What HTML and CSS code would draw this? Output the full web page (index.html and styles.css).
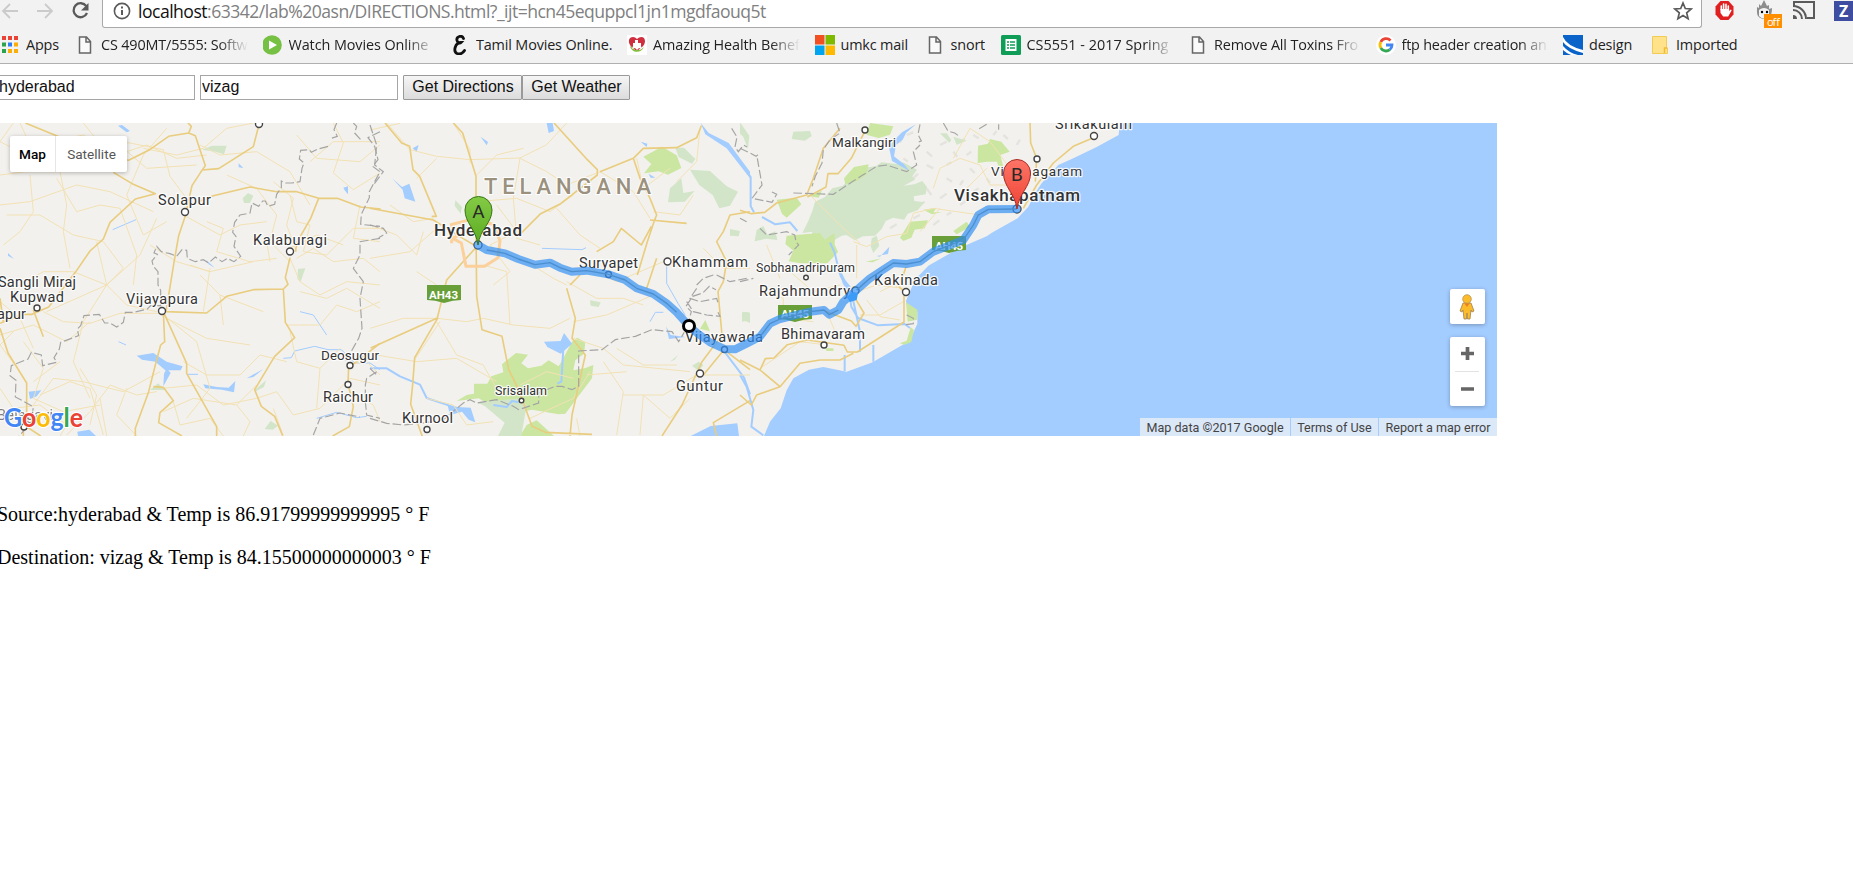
FILE: index.html
```html
<!DOCTYPE html>
<html lang="en">
<head>
<meta charset="utf-8">
<title>Directions</title>
<link rel="stylesheet" href="styles.css">
</head>
<body>
<header class="chrome">
  <div class="toolbar">
    <svg class="nav" width="102" height="27" viewBox="0 0 102 27" fill="none">
      <g stroke="#cbcbcb" stroke-width="1.8"><path d="M18 11H3M10 4L3 11l7 7M37 11h15M45 4l7 7-7 7"/></g>
      <path d="M86.3 6.2A7 7 0 1 0 87 13" stroke="#5a5a5a" stroke-width="2.3"/><path d="M88.500 3v7.500h-7.500z" fill="#5a5a5a"/>
    </svg>
    <div class="address">
      <svg width="18" height="20" viewBox="0 0 18 20" fill="none" stroke="#5a5a5a"><circle cx="9" cy="10" r="7.600" stroke-width="1.600"/><path d="M9 9v5M9 5.500v2" stroke-width="2"/></svg>
      <div class="url"><span class="host">localhost</span>:63342/lab%20asn/DIRECTIONS.html?_ijt=hcn45equppcl1jn1mgdfaouq5t</div>
      <svg class="star" width="20" height="20" viewBox="0 0 20 20" fill="none" stroke="#5a5a5a" stroke-width="1.700"><path d="M10 2l2.300 5.500 5.900.5-4.500 3.900 1.400 5.800-5.100-3.100-5.100 3.100 1.400-5.800L1.800 8l5.900-.5z"/></svg>
    </div>
    <svg class="extensions" width="151" height="29" viewBox="0 0 151 29">
      <path d="M18.500 1h8l5 5.500v8l-5 5.500h-8l-5-5.500v-8z" fill="#e02020"/>
      <path d="M19.300 10V6M21.600 9V4M24 9V4.300M26.300 10V6" fill="none" stroke="#fff" stroke-width="1.600" stroke-linecap="round"/><path d="M18.500 9h8.600v2l1.600-1.500 1 .8-3.500 6.200h-5l-2.700-3.500z" fill="#fff"/>
      <path d="M62 0l-3 6-2-2v4l-2-1c0 6-1 11 7 12 7 0 8-6 8-11l-3 1V5l-2 1z" fill="#8d8d8d"/><path d="M57 10q5-4 10 0v6q-5 5-10 0z" fill="#f4f4f4"/><circle cx="60" cy="12" r="1.200"/><circle cx="65" cy="12" r="1.200"/>
      <rect x="62" y="14" width="18" height="14" fill="#ff8f00"/><text x="65" y="25.500" class="badge" textLength="13">off</text>
      <g fill="none" stroke="#5a5a5a" stroke-width="2"><path d="M92 6V2h20v16h-7M91 10a9 9 0 0 1 9 9M91 6a13 13 0 0 1 13 13"/></g><path d="M91 15a4 4 0 0 1 4 4h-4z" fill="#5a5a5a"/>
      <rect x="132" y="1" width="19" height="20" fill="#3e4da0"/><text x="137" y="17" class="zed">Z</text>
    </svg>
  </div>
  <nav class="bookmarks">
    <a class="bm apps"><svg viewBox="0 0 20 20"><path d="M2 1h4v4H2zM8 1h4v4H8zM14 1h4v4h-4z" fill="#ea4335"/><path d="M2 7.500h4v4H2zM2 14h4v4H2z" fill="#2ba24c"/><path d="M8 7.500h4v4H8z" fill="#2f7df6"/><path d="M14 7.500h4v4h-4zM8 14h4v4H8zM14 14h4v4h-4z" fill="#fbae08"/></svg><span>Apps</span></a>
    <a class="bm wide fade a"><svg viewBox="0 0 20 20"><path d="M4.500 2h7l4 4.500V18h-11zM11 2v5h4.500" fill="#fafafa" stroke="#666" stroke-width="1.500"/></svg><span>CS 490MT/5555: Softw</span></a>
    <a class="bm wide fade b"><svg viewBox="0 0 20 20"><circle cx="9" cy="10" r="9.800" fill="#76c043"/><path d="M6 5.500l8 4.500-8 4.500z" fill="#fff"/></svg><span>Watch Movies Online</span></a>
    <a class="bm tamil"><svg viewBox="0 0 20 20"><path d="M13.500 3.500C12-.5 6 1.500 7 5.500c.5 2.500 3 3 4 2-6 0-8 9-4 11 3 1.200 6-.5 7.500-3" fill="none" stroke="#111" stroke-width="2.800" stroke-linecap="round"/></svg><span>Tamil Movies Online.</span></a>
    <a class="bm wide fade c"><svg viewBox="0 0 20 20"><rect width="20" height="20" fill="#fff"/><path d="M10 16C3 12 0 7 3 3c3-2 5-1 7 1 2-2 5-3 7-1 3 5-1 9-7 13z" fill="#cf3040"/><path d="M3 11c1 6 10 9 14 1l-4 3H8z" fill="#82bd3c"/><path d="M8 5h3v3h3v3l1 3-3-1-2 2-2-2-3 1 1-3V8h2z" fill="#fff"/></svg><span>Amazing Health Benef</span></a>
    <a class="bm umkc"><svg viewBox="0 0 20 20"><path d="M0 0h9.500v9.500H0z" fill="#f25022"/><path d="M10.500 0H20v9.500h-9.500z" fill="#7fba00"/><path d="M0 10.500h9.500V20H0z" fill="#00a4ef"/><path d="M10.500 10.500H20V20h-9.500z" fill="#ffb900"/></svg><span>umkc mail</span></a>
    <a class="bm snort"><svg viewBox="0 0 20 20"><path d="M4.500 2h7l4 4.500V18h-11zM11 2v5h4.500" fill="#fafafa" stroke="#666" stroke-width="1.500"/></svg><span>snort</span></a>
    <a class="bm wide fade d"><svg viewBox="0 0 20 20"><rect width="20" height="20" rx="1.500" fill="#0f9d58"/><path d="M4.500 4h11v12h-11z" fill="#fff"/><path d="M6 7h2m1 0h5M6 10h2m1 0h5M6 13h2m1 0h5" stroke="#0f9d58" stroke-width="1.600"/></svg><span>CS5551 - 2017 Spring</span></a>
    <a class="bm wide fade e"><svg viewBox="0 0 20 20"><path d="M4.500 2h7l4 4.500V18h-11zM11 2v5h4.500" fill="#fafafa" stroke="#666" stroke-width="1.500"/></svg><span>Remove All Toxins Fro</span></a>
    <a class="bm wide fade f"><svg viewBox="0 0 20 20"><circle cx="10" cy="10" r="10" fill="#fff"/><g fill="none" stroke-width="2.800"><path d="M14.500 5.500A6 6 0 0 0 4.800 7" stroke="#ea4335"/><path d="M4.800 7a6 6 0 0 0 0 6" stroke="#fbbc05"/><path d="M4.800 13a6 6 0 0 0 9 1.600" stroke="#34a853"/><path d="M10 10h6q0 3-2.200 4.600" stroke="#4285f4"/></g></svg><span>ftp header creation an</span></a>
    <a class="bm design"><svg viewBox="0 0 20 20"><path d="M0 0h20v20H0z" fill="#0a63c9"/><path d="M0 2q4 9 20 13v3Q5 14 0 7zM0 11q6 7 15 9H8Q3 18 0 15z" fill="#fff"/></svg><span>design</span></a>
    <a class="bm imported"><svg viewBox="0 0 20 20"><path d="M2.500 1.500h14v12h1v5h-15z" fill="#ffe28a" stroke="#f2cb55"/><path d="M14.500 18v-5h3" fill="none" stroke="#efbd35" stroke-width="1.500"/></svg><span>Imported</span></a>
  </nav>
</header>
<main>
  <form class="controls">
    <input class="from" type="text" value="hyderabad"><input class="to" type="text" value="vizag"><button class="dir" type="button">Get Directions</button><button class="wea" type="button">Get Weather</button>
  </form>
  <section class="map">
    <svg class="canvas" width="1497" height="313" viewBox="0 0 1497 313">
      <rect width="1497" height="313" fill="#f2f1ed"/>
      <!-- eastern terrain, parks and sea -->
      <g transform="translate(740 -8) scale(.33333)">
        <path class="hills" d="M470 70l14 12M500 60l20-8M560 110l16 14M600 90l20-10M640 110l12 16M560 150l20 10M520 190l14-14M620 190l16 10M660 210l10-14M690 160l14 14M600 250l20-14M560 220l14 20M660 270l20-14M700 230l16-10M740 190l10 14M520 310l20-10M580 330l18-14M450 340l20-12M420 320l16-16M390 350l20-14M790 60l14 12M830 90l10-16M760 60l10-12M660 80l14-8M700 60l16 10M490 130l14 10M780 100l14 10M840 140l-10 16M620 150l14-8M680 120l14-10M540 270l14-10M620 300l14-8"/>
        <g class="forest"><path d="M205 318l12-30 8-28 30-14 22-26 32-8 18-22 26-10 20-22 34-4 18-12 50 6 14-6 42 22-14 20 8 10-34 18 32-4 24-10 14 18-4 22-36 6 2 14 30 4-20 24-30 10-10 18-34-6-22 10-12 24-20 20-36 2-24 12-26-16-14 2-20 12-6 20-12 14-18-22-20 2-20-8 8-30-30 4zM160 50l50-2 5 15-20 14-40-5zM0 22l28 40-4 40-14-36-10-10zM50 345l20-12 12 26 24-10 6 26-34-4-34 8zM395 370l15-8 8 30-18 22-8-20zM6 592l22 0-2 24-20 4zM600 55l20 0 14 20-6 8zM640 65l40 12-30 12z"/></g>
        <g class="park"><path d="M140 362l100-8 14 20 30-20 0 35 10 22-32 34-80 0-36-6 14-32-24-20zM714 92l30-6 6-14 34 8 25 30-28 10 10 40-16-6-4-14-30 0-28 4zM312 190l30-34 44-8-6 30-30 20-34 10zM390 24l70 10-10 25-34 10-36-10zM110 254l60-6 14 20-44 40-14-12zM480 368l30-48 54-4-10 24-30 4-10 24-24 10zM640 348l40-28 10 16-40 22zM378 440l46-10-26 12zM256 700h24v8h-20zM550 284l40-6-10 14 26 0-30 6zM200 242l46-14-10 20z"/></g>
        <g class="water-line"><path d="M0 140l32 46v88l10 18M66 306l40 22 44-6 22 26M270 383l14 30 10 42 8 28 24 42 8 50 20 34 60 22 80-4 16 12M336 540l24 110 0 60M400 690v50M314 720v48M0 780l20 35 20 70-6 50 36 26"/></g>
        <path d="M528 28l-30 26-10 20-20 16-6 34 30 24 16 20-52-30-10-46 40-40zM420 425l28-30-4 22-34 6zM296 455l20 40 24 30-8 20-24-40z" fill="#a3ccff"/>
        <path class="sea" d="M1140 24L1136 60L1070 96L1000 130L955 150L905 205L888 230L865 275L833 310L758 352L740 364L660 398L565 452L527 492L514 520L498 558L503 582L532 590V627L508 678L465 703L398 742L320 770L250 756L207 764L160 790L140 826L122 880L90 920L72 963H2272V24z"/>
        <path class="parkedge" d="M498 562l34 22-1 30-28 6zM480 685l20-8 12-40 10 8-8 36-20 8z"/>
      </g>
      <!-- central parks and rivers -->
      <g transform="translate(370 -8) scale(.33333)">
        <g class="park"><path d="M260 858l30-18 22-4 0-30 40 0 12-22 36-12-4-24 42-34 36 5-20 26 20 15 40-8 22-16 30 18 14-24 26-50 16-12 24 14-4 34-26 20-6 30 34-6 26-10-4 40-50 66-30 40-20 2-80-14-80 16-80-50zM470 930l30-14 52 47H450zM820 125l56-30 44 26 14 38-40 20-28-10-44 6 22-28zM1006 615l14 34-30-8z"/></g>
        <g class="forest"><path d="M320 862l130-12 20 20-16 93h-70l20-40-60-50zM916 98l26 0 34 34-10 14-40-20zM960 164l60 4 50 46 34 16-24 42-32 8-20-40-40-30zM900 220l34-30 6 44 34-6-30 32-50 2zM660 556l32 6-6 14-24-4zM966 752l20-12 14 10-14 18zM256 256l20 20-4 20-18-24zM900 740l24-20-10 14zM1080 342l30 6-4 16-26-2zM1120 590l20 4v30l-24-10z"/></g>
        <g class="water"><path d="M66 190l30 26 22-10 18 54-32-10-6-26zM530 24h18l4 24-16 6zM332 65l22 16-4 10zM128 100l18-10-6 20zM522 680l50-2 10-24 24 32-34 30-40-20zM232 868l30 8 40 2 14 44-20-8-20-24-36 10zM992 24l24 30 60 30 64 86v20L1070 100l-64-42zM888 634l14 26 45 6-50 6zM812 80l20 6-2 10zM836 176l20 12-14 0z"/><path d="M962 963l60-30 80-8 5 38z"/></g>
        <g class="water-line"><path d="M0 760l50 0 40 24 60 25 20 40 66 22M580 700l-6 100-12 6M1062 708l60 80 18 50M370 870l40 6 16-18 20 4"/></g>
        <g class="water-line thin"><path d="M516 400l120 4 12-6M890 455v50l34 60 22 36M840 620l16-28 24 0"/></g>
      </g>
      <!-- western lakes -->
      <g transform="translate(0 -8) scale(.33333)">
        <g class="water"><path d="M410 722l50-8 40 26 48 14-6 12-46 0-30-26-40-6zM500 760l12 14-22 40 2-38zM610 808l40 8 36 2 20-20-4 34-36-8-50-4zM86 830l38-4-14 18-20 8zM354 32l26 20 10-4-24-18zM1030 218l14-4v24l-10-12zM716 145l14 14-14-2zM232 950l36-6 20 19h-54zM740 790l50-28-30 24zM618 434l26 24-18-10zM24 414l18 18-18-10z"/></g>
        <g class="forest"><path d="M606 104l30-12h44l-8 26-26-8zM728 250l16-16 16 8-10 22-18 0zM894 462l22-2-14 40-10-8zM764 826l34-30-6 20-28 14zM450 825l24-20 22 20-32 0zM794 942l18-24 22 14-16 12z"/></g>
        <g class="water-line thin"><path d="M850 730l24-2 10-20 60-14 40 10 40 0 40 40 46 0 30 20M900 590l40 10 40 60M950 910l60-18 60 16 30-4M338 344l70-30M356 680l22 10M564 778h30"/></g>
      </g>
      <!-- minor roads -->
      <g class="minor" transform="translate(0 -8) scale(.33333)">
        <path d="M0 80l40 20 60 10 50-30 100-20 100 60 90-30 90 40 90-10M60 24l40 86 80 60 20 100-10 80 20 110M0 180l80-10 90 0 140-10 60-60 70 60 150-10M0 270l90-10 140-50 100 20 130 60M40 24L0 80M20 300l100 0 100 60 90 20 60 80-50 50-100-40-90 0-90 50M90 180l10 110-40 60-50 40M170 190l60 100 70-20 60 10 50 140-10 90M250 24l40 50 100 10 100 20 20 80 60 80M500 40l-70 80-50 120 50 120 70-40M430 100l100 20 80-20 70-60 80-16M600 90l60 30 110-10 100 60 60 100M680 180l90 40 60 80-20 80 60 60M620 320l50 20-20 70 100 30 80-10M550 300l110 60 60-30 80-10M870 240l20 80 40 10-20 80 70 10 80-80 90 0M820 200l60 50-20 80 30 80M930 140l70-60 140 0M890 60l60 70 130 10 60-50M1000 24l30 60-30 90 60 50 80-50M1080 270l-20 100 80 10M870 430l30 70 60 40 80-40 100 10M900 530l80 20 60-30 100 60M860 630l100 0 50-60 60 20 70-30M890 430l50-30 60 40 90-10 50 40M870 400l80-40 80 30"/>
        <path d="M450 390l80 50 100 30 130-30M320 510l100-90 50-110M320 510l-30-130M320 510L140 590M320 510l-70 110-30 120 50 110M320 510l60 60 90 20M130 590l60 30 80 5 90-30 120 0M0 660l100-30 100 50 70-60M70 680l60 80-30 90 90 40 110-20M180 740l-80 60M100 870l60-80 90 10 120 30 110-60M200 960l70-70 60-80 80 30 60-10M0 820l40 60 80-10 80 60-20 33M120 840l90-40 60 20 40 140M490 600l100 80 40 140-70 90M500 610l120 60 130 20M630 460l-20 130M600 480l60 60 10 90M660 540l130 50M630 470l-60-20M800 380l10 60M550 740l70 40 100 0 60-60 80 20M490 820l100-10 80 60 100-20M490 890l90-40 130 20 60-60M520 860l20 70 90-20 40 53M710 870l40 50-20 43M770 850l60-20 50 70 80-20 90-90 90 20M820 880l30 83M870 650l20 90 70 20 60-60M960 760l-10 120M1040 750l60-10 40 40M1050 830l70 40 20 50M0 560l60 50 40 90M40 650l-40 40 60 80M240 760l50 80-20 90M300 850l20 113M380 820l-30 80 60 63"/>
      </g>
      <g class="minor" transform="translate(370 -8) scale(.33333)">
        <path d="M0 45l90-20M50 24l70 80 80 20 100 10 150-5 80-40 60-65M140 190l60-60M250 24l50 80 0 40M320 180l60-60 80-20M450 130l-20 120 10 120 70 20M450 130l80 40 60 40 100-40M320 260l120-10 100 40 70-50M690 170l100 60 50 80M800 130l20 90 80-60M560 280l70 80 60 40M0 330l80 30 60 60 20-70M190 310l-60 10-70-50M380 270l60 80-80 40 60 80-50 40M340 450l70 20 10 160M200 610l90 10 50-10 90 20 110 10 60-30M590 500l90 50 80 0 60 20M610 620l100-20 140-60M470 440l80 50 40 20M20 720l120 20 120-10 120 70M200 620l60 100 80 30 50 90M130 740l80-120M610 670l90 30 60 50 200 20M700 740l60 90-20 130M820 840l-10 120M820 840l80 70 60-60M760 840l120 0 100-60M650 780l120-10M450 810l80-40 80 20M480 910l130-60 50-80M620 910l10 53M740 700l80 50 100 0M1000 780l140 0M1000 400l60 60 80 0M880 440l-140 60-80-40M140 470l60 40M0 640l100-30 100 0M0 430l120-20 80-70M170 850l80 20 40 60 80-10M850 290l80 10 40-60M920 200l60-60 10-100"/>
      </g>
      <g class="minor" transform="translate(740 -8) scale(.33333)">
        <path d="M340 380l40 15 60-30 60-10 20-60 60-15 70 10 70 10M580 220l20-60 60-30 60 20 30 60 60 0M640 130l50-90 60 40 60 80M740 160l-60 60M350 390v100M210 240l90 90 60 55M500 530l-40-20-40 20M350 530l60-20 80 10M360 600l60 0 70-40M70 530l60 20 0 60 90 10M150 470l70 60 80-20M260 590l30 70 60 10M540 350l60-70M60 760l120-80 80 10M380 555l40 50 60 10M80 390l40 100"/>
      </g>
      <!-- highways -->
      <g class="major" transform="translate(0 -8) scale(.33333)">
        <path d="M76 24l110 45 120 55 80 12 60-30 60-42 60-10 8-20-10-10M566 54l20 8 30 90-14 20-26 40-20 90-20 60-14 80-24 148M606 165l50-4 104-66 18-70M340 172l60 36 66 28-60 16-76 70-20 50-40 36-44 64-80 104-50 22H70L0 625M570 270l70-28 110-26 80 14 60 0 66 20-24 60-40 70-6 30M956 250l56 0 70 26 60 6M870 428l-14 60 8 20-14 14-90 2-80 20-60 50-124-4M850 522l6 100 28 46-60 56-60 100 20 50 40 30 24 58M490 590l4 90-12 10-16 60-20 80-40 110 0 23M490 590l70 155 0 30 90 160v28M460 815l30 2 30 40-40 36-4 30 70 40M0 640l24 74 56 90v120M130 665l-30-80M1046 755l-2 50 16 70-12 60-50 28M1050 755l90-70M0 550l10 70M70 935v28M72 930l50 33"/>
      </g>
      <g class="major" transform="translate(370 -8) scale(.33333)">
        <path d="M45 24l50 60 24 10 10 70 20 20 50 120-14 0M250 24l28 30 40 130 0 160 2 200 16 100 60 20 20 100 30 60 40 110 40 18 140 6M0 280l190 35 80 50 50 30-90 100-28 114-200 90M204 608l-70 120-6 80-6 60 40 110M552 24l100 110 30 30 0 16-110 86-60 30-60 60M690 170l100-40 30-30 100-2 60-30 14-36M790 130l20 60 30 60 20 50-8 20-20 60-30 100M840 315l110 10M680 410l50-30 24-40 60 50 30-56M860 430l-30 90M590 520l26 90-10 60 40 50-20 90-20 90-6 63M600 510l30-30M1140 290l-60 10-20 50-20 30 30 60-10 60-16 30 12 130-60 80-60 130-60 93M1000 780l62-76 78 60M1040 963l-10-40 110-66"/>
      </g>
      <path class="ring" transform="translate(370 -8) scale(.33333)" d="M240 330l60-16 70 14 20 50-6 50-40 26-56 0-14-70-26-14 76-40M245 335l0 50"/>
      <g class="major" transform="translate(740 -8) scale(.33333)">
        <path d="M300 40l-50 60-30 90-20 50-90 24-36 28-40 4-34-10M374 50l-40 80-40 46-30 0-6 40-56 30M870 24l2 60 18 46-4 70M1060 68l-60 26-60 50-50 66-40 70M254 588l80 30 14 16 24-40-30-50-2-30M0 735l60 30 60 50-70 25-16 30-34-30M60 765l16-34 26-2 40-40 60-14 110 16 10 20 30 0 140-90 0-90-14-16 20-60M120 815l60-70 60-10 60 0 40-20"/>
      </g>
      <!-- state borders -->
      <g class="border">
        <path transform="translate(0 -8) scale(.33333)" d="M1010 24l-8 20 10 20-18 6M984 94l-30 8-20 10-6-8-26 2-4 26 14 12-6 16-6 40-24 4-20 0-12-6 0 20-14 20-6 30-20 6-8-16-8 0-12 16-20-10-6 30-30 6-16 22-6 30 10 12-6 30 20 30-20 16-20-10-16 10-20-14-20 18-16-10-24 6-24-10-2-24-14-2-16 20-20-8-26-6-14-16-8 20 10 4-16 20 4 16 14 16 0 40 8 16 0 16 0 30-30 0-10 10-40 10-26 0-6 30-20 14-20-12-16 0-16-26-46 4-10 30-10 10 4 20-54 20-4 20-16 26 8 14-42 10-4-32-30-8-10 20-50 20-4 30 18 14-2 50 20 10 34 20-4 30-20 6 0 30-26 30M1060 24l10 10-6 20 18 20M1140 50l-36 18 20 26 10 40-16 20 22 16-16 30-16 30 0 18-24 50-2 30 58 6M1140 370l-60 10 0 40-20 40 30 40-10 50 6 90-10 30-40 70M1130 770l-30 20-4 20v50l4 40 40 10M940 960l20-50 60-16 60 12"/>
        <path transform="translate(370 -8) scale(.33333)" d="M0 30l20 60-6 60 26 20-30 40M0 330l40 10 10 14-24 14M0 910l50 15 50 5 60-6 60-10 60-50 20-10 20 10 60-10 50 20 16 10 60-20 0-30 50-20 20 0 30 10 20-10 0-106 70-4 40-30 60-10 50-20 60 6 20 30 24-40 14-50-16-16 20-30 30-10 20-20 20 10M980 510l20-20 30-10M1040 480l40 20 50-10M980 520l-20 30 30 10 50-10 6 20M950 560l20 30 40 10 40 4-8-16M1085 40l16 26-6 30 10 14 16-20 10 6M0 760l20 20"/>
        <path transform="translate(740 -8) scale(.33333)" d="M0 100l30 14 18 10 10-8M52 130l14 80-30 40 60 12 14-24-16-8M0 310l20 10M60 340l20 20 60-10 24 10 4 20 8 10-30 30M160 234l120 4 60-40 70-44 30-4 60 20 30-20-10-40 20-20M290 24l10 30-30 20-20 30-4 40-20 40-10 30M540 28l-6 30 10 20-12 4M0 500l40-10M610 24l14 24 20 6 14 10M500 600l20 10v16l-30 4M740 28l-24 14M776 28l0 16"/>
      </g>
      <!-- town dots and labels -->
      <g class="dots"><circle cx="259" cy="1" r="3.500"/><circle cx="185" cy="89" r="3.500"/><circle cx="290" cy="128.500" r="3.500"/><circle cx="162" cy="188" r="3.500"/><circle cx="37" cy="185" r="3"/><circle cx="350" cy="242.500" r="3"/><circle cx="348" cy="261.500" r="3"/><circle cx="24" cy="304" r="3"/><circle cx="427" cy="306.500" r="3"/><circle cx="521.500" cy="277.500" r="2.300"/><circle cx="700" cy="250.500" r="3.500"/><circle cx="667.500" cy="138.500" r="3.500"/><circle cx="865" cy="7" r="3"/><circle cx="1094" cy="13" r="3.500"/><circle cx="1037" cy="36" r="3"/><circle cx="906" cy="169" r="3.500"/><circle cx="806" cy="154.500" r="2.300"/><circle cx="824" cy="222" r="3"/><circle cx="478" cy="122" r="4"/><circle cx="608.500" cy="151.500" r="3"/><circle cx="724.500" cy="226.500" r="3"/><circle cx="855.500" cy="167.500" r="3.500"/><circle cx="1017" cy="86" r="4"/></g>
      <g class="shield"><path d="M427 162h34v15q-8 0-17 3-9-3-17-3zM778 182h34v14q-8 0-17 3-9-3-17-3zM932 113h34v14q-8 0-17 3-9-3-17-3z"/><text x="429" y="175.500" textLength="29">AH43</text><text x="781" y="195" textLength="28">AH45</text><text x="935" y="126.500" textLength="28">AH45</text></g>
      <g class="labels">
        <text x="158" y="82" textLength="53">Solapur</text><text x="253" y="121.500" textLength="74">Kalaburagi</text><text x="126" y="181" textLength="72">Vijayapura</text><text x="-2" y="164" textLength="78">Sangli Miraj</text><text x="10" y="179" textLength="54">Kupwad</text><text x="-3" y="196" textLength="29">apur</text><text x="321" y="237" class="s" textLength="58">Deosugur</text><text x="323" y="279" textLength="50">Raichur</text><text x="-3" y="297" textLength="56" opacity=".6">Belagavi</text><text x="402" y="300" textLength="51">Kurnool</text><text x="495" y="272" class="xs" textLength="52">Srisailam</text><text x="676" y="268" textLength="47">Guntur</text><text x="579" y="145" textLength="59">Suryapet</text><text x="672" y="144" textLength="76">Khammam</text><text x="685" y="219" textLength="78">Vijayawada</text><text x="756" y="149" class="xs" textLength="99">Sobhanadripuram</text><text x="759" y="173" textLength="91">Rajahmundry</text><text x="874" y="162" textLength="64">Kakinada</text><text x="781" y="216" textLength="84">Bhimavaram</text><text x="832" y="23.500" class="s" textLength="64">Malkangiri</text><text x="991" y="53" class="s" textLength="91">Vizianagaram</text><text x="1055" y="5.500" textLength="77">Srikakulam</text>
        <text x="434" y="113" class="city" textLength="88">Hyderabad</text><text x="954" y="77.500" class="city" textLength="126">Visakhapatnam</text>
      </g>
      <text class="state" x="484" y="70.500" textLength="167">TELANGANA</text>
      <!-- route -->
      <g transform="translate(370 -8) scale(.33333)">
        <path class="route" d="M324 390L350 405L405 415L445 432L495 449L540 443L570 458L605 470L650 467L715 478L765 495L800 520L850 537L890 565L920 592L957 633L985 657L1020 682L1063 702L1095 703L1130 686L1170 665L1200 626L1230 612L1320 590L1362 585L1378 599L1405 585L1420 560L1460 525L1500 490L1570 444L1610 447L1650 440L1690 410L1780 375L1810 330L1825 300L1855 283L1940 282"/>
        <path class="spine" d="M350 405L405 415L445 432L495 449L540 443L570 458L605 470L650 467L715 478L765 495L800 520L850 537L890 565L920 592M1170 665L1200 626L1230 612L1320 590L1362 585L1378 599L1405 585M1460 525L1500 490L1570 444L1610 447L1650 440L1690 410L1780 375L1810 330L1825 300L1855 283L1940 282"/>
        <path d="M1430 545l20-14 14 4-4 20-20 6z" fill="#3d9bf8"/>
      </g>
      <circle cx="689" cy="203" r="5.500" fill="#fff" stroke="#000" stroke-width="3"/>
      <defs>
        <linearGradient id="green" x2="0" y2="1"><stop stop-color="#84cb44"/><stop offset="1" stop-color="#5aaa22"/></linearGradient>
        <linearGradient id="red" x2="0" y2="1"><stop stop-color="#fd7567"/><stop offset="1" stop-color="#ef4334"/></linearGradient>
      </defs>
      <g stroke-width="1"><path d="M478 122C476 106 465 100 465 87a13.500 13.500 0 0 1 27 0C492 100 480 106 478 122z" fill="url(#green)" stroke="#397516"/><path d="M1017 86C1015 70 1003.500 64 1003.500 50a13.500 13.500 0 0 1 27 0C1030.500 64 1019 70 1017 86z" fill="url(#red)" stroke="#a92c25"/></g>
      <text class="pin" x="478.500" y="94.500">A</text><text class="pin" x="1017" y="57.500">B</text>
      <text class="logo" x="4" y="303.500" textLength="79" lengthAdjust="spacingAndGlyphs"><tspan fill="#4285f4">G</tspan><tspan fill="#ea4335">o</tspan><tspan fill="#fbbc05">o</tspan><tspan fill="#4285f4">g</tspan><tspan fill="#34a853">l</tspan><tspan fill="#ea4335">e</tspan></text>
    </svg>
    <div class="types"><button class="on">Map</button><button>Satellite</button></div>
    <div class="zoomer">
      <div class="card person"><svg width="16" height="26" viewBox="0 0 16 26"><path d="M4 9l-3 8 2 1 1-2 1 9h2.500l.5-6 .5 6H11l1-9 1 2 2-1-3-8z" fill="#fbbb2b" stroke="#9e8250" stroke-width=".8"/><circle cx="8" cy="5" r="4.300" fill="#fbbb2b" stroke="#b08d48" stroke-width=".7"/><path d="M5.500 9.500h5L8 13z" fill="#ed7d20"/></svg></div>
      <div class="card plus"><svg width="35" height="69" viewBox="0 0 35 69"><path d="M11 16.500h13M17.500 10v13M11 52h13" stroke="#666" stroke-width="3.700"/><path d="M5 34.500h24" stroke="#e3e3e3"/></svg></div>
    </div>
    <div class="credits"><span class="data">Map data ©2017 Google</span><span class="terms">Terms of Use</span><span class="report">Report a map error</span></div>
  </section>
  <section class="weather">
    <p>Source:hyderabad &amp; Temp is 86.91799999999995 ° F</p>
    <p>Destination: vizag &amp; Temp is 84.15500000000003 ° F</p>
  </section>
</main>
</body>
</html>
```
FILE: styles.css
```css
* { box-sizing: border-box; }
body { margin: 0; width: 1853px; height: 876px; overflow: hidden; background: #fff; }
.chrome { height: 64px; background: #f2f2f2; border-bottom: 1px solid #b0b0b0; overflow: hidden; }
.toolbar { display: flex; height: 29px; align-items: flex-start; }
.address { width: 1600px; height: 28px; display: flex; align-items: center; padding: 0 8px 6px 10px; background: #fff; border: 1px solid #a9a9a9; border-top: 0; border-radius: 0 0 3px 3px; }
.url { margin-left: 7px; font: 17.600px "Open Sans", sans-serif; letter-spacing: -.52px; line-height: 22px; color: #808080; white-space: nowrap; }
.host { color: #111; }
.star { margin-left: auto; }
.badge { font: 11px "Open Sans", sans-serif; fill: #fff; }
.zed { font: bold 16px "Open Sans", sans-serif; fill: #fff; }
.bookmarks { display: flex; height: 34px; padding-top: 6px; }
.bm { display: flex; gap: 6px; height: 20px; align-items: center; font: 14.4px "Open Sans", sans-serif; line-height: 20px; letter-spacing: -.15px; color: #222; white-space: nowrap; }
.bm svg { width: 20px; height: 20px; flex: none; }
.bm span { overflow: hidden; }
.wide { width: 187.500px; }
.wide span { width: 147px; }
.wide.b, .wide.c { letter-spacing: -.08px; }
.wide.d { letter-spacing: .02px; }
.wide.f { letter-spacing: -.2px; }
.fade span { mask-image: linear-gradient(90deg, #000 80%, transparent 100%); }
.apps { width: 75px; }
.tamil { width: 177px; }
.umkc { width: 110px; }
.snort { width: 76px; }
.design { width: 87px; }
.imported { width: 100px; }
.controls { display: flex; margin: 0; height: 59px; padding-top: 11px; }
.controls input { height: 25px; border: 1px solid #a5a5a5; padding: 0 2px 1px 1px; font: 16px "Liberation Sans", Arial, sans-serif; color: #111; }
.controls .from { width: 198px; margin-left: -3px; margin-right: 5px; }
.controls .to { width: 198px; margin-right: 5px; }
.controls button { height: 25px; border: 1px solid #999; border-radius: 1px; padding: 0 0 1px 1px; background: linear-gradient(#f5f5f5, #dcdcdc); font: 16px "Liberation Sans", Arial, sans-serif; color: #111; white-space: nowrap; }
.controls .dir { width: 119px; }
.controls .wea { width: 108px; }
.map { position: relative; width: 1497px; height: 313px; overflow: hidden; }
.canvas { display: block; }
.hills { fill: none; stroke: #e4e3de; stroke-width: 7; }
.forest { fill: #d2e5c9; }
.park, .parkedge { fill: #cae6a0; }
.water, .sea { fill: #a3ccff; }
.water-line { fill: none; stroke: #a3ccff; stroke-width: 6; stroke-linejoin: round; }
.thin { stroke-width: 3; }
.minor { fill: none; stroke: #f3e1b4; stroke-width: 3; stroke-linejoin: round; }
.major { fill: none; stroke: #e9cc7d; stroke-width: 4.800; stroke-linejoin: round; }
.ring { fill: none; stroke: #fbd09a; stroke-width: 9; stroke-linejoin: round; }
.border { fill: none; stroke: #a4a4a4; stroke-width: 3.500; stroke-dasharray: 26 9; }
.dots { fill: #fff; stroke: #444; stroke-width: 1.400; }
.labels text { font: 14.500px Roboto, sans-serif; fill: #333; stroke: #fff; stroke-width: 2.500px; stroke-opacity: .85; paint-order: stroke; stroke-linejoin: round; }
.labels text.s { font-size: 13.500px; }
.labels text.xs { font-size: 12.500px; }
.labels text.city { font-size: 17px; font-weight: 500; }
.state { font: 500 22px Roboto, sans-serif; fill: #9b917d; stroke: #fff; stroke-width: 2px; paint-order: stroke; }
.shield { fill: #689f38; }
.shield text { font: bold 11.500px Roboto, sans-serif; fill: #fff; }
.route { fill: none; stroke: #2d8df5; stroke-opacity: .68; stroke-width: 24; stroke-linejoin: round; stroke-linecap: round; }
.spine { fill: none; stroke: #4b8fcf; stroke-width: 4; stroke-linejoin: round; }
.pin { font: 19px Roboto, sans-serif; fill: #292929; text-anchor: middle; }
.logo { font: 500 26px Lato, sans-serif; stroke: #fff; stroke-width: 2px; paint-order: stroke; }
.logo tspan { font-weight: 700; }
.types { position: absolute; left: 10px; top: 13px; display: flex; height: 36px; background: #fff; border-radius: 2px; box-shadow: 0 1px 4px #0004; }
.types button { width: 71px; padding: 0; border: 0; background: none; font: 13.600px Roboto, sans-serif; color: #565656; }
.types .on { width: 46px; border-right: 1px solid #e6e6e6; color: #000; font-weight: 500; }
.zoomer { position: absolute; right: 12px; top: 166px; display: flex; flex-direction: column; gap: 13px; }
.card { width: 35px; background: #fff; border-radius: 2px; box-shadow: 0 1px 4px #0004; }
.person { height: 35px; display: flex; align-items: center; justify-content: center; padding-right: 2px; }
.plus { height: 69px; }
.credits { position: absolute; right: 0; bottom: 0; display: flex; gap: 1px; height: 18px; font: 12.600px Roboto, sans-serif; line-height: 20px; color: #444; text-align: center; white-space: nowrap; }
.credits span { background: #dbe8f8; }
.data { width: 150px; }
.terms { width: 87px; }
.report { width: 118px; }
.weather { padding-top: 67px; font: 20px "Liberation Serif", "Times New Roman", serif; color: #000; }
.weather p { margin: 0 0 0 -3px; height: 43px; line-height: 22px; }
```
